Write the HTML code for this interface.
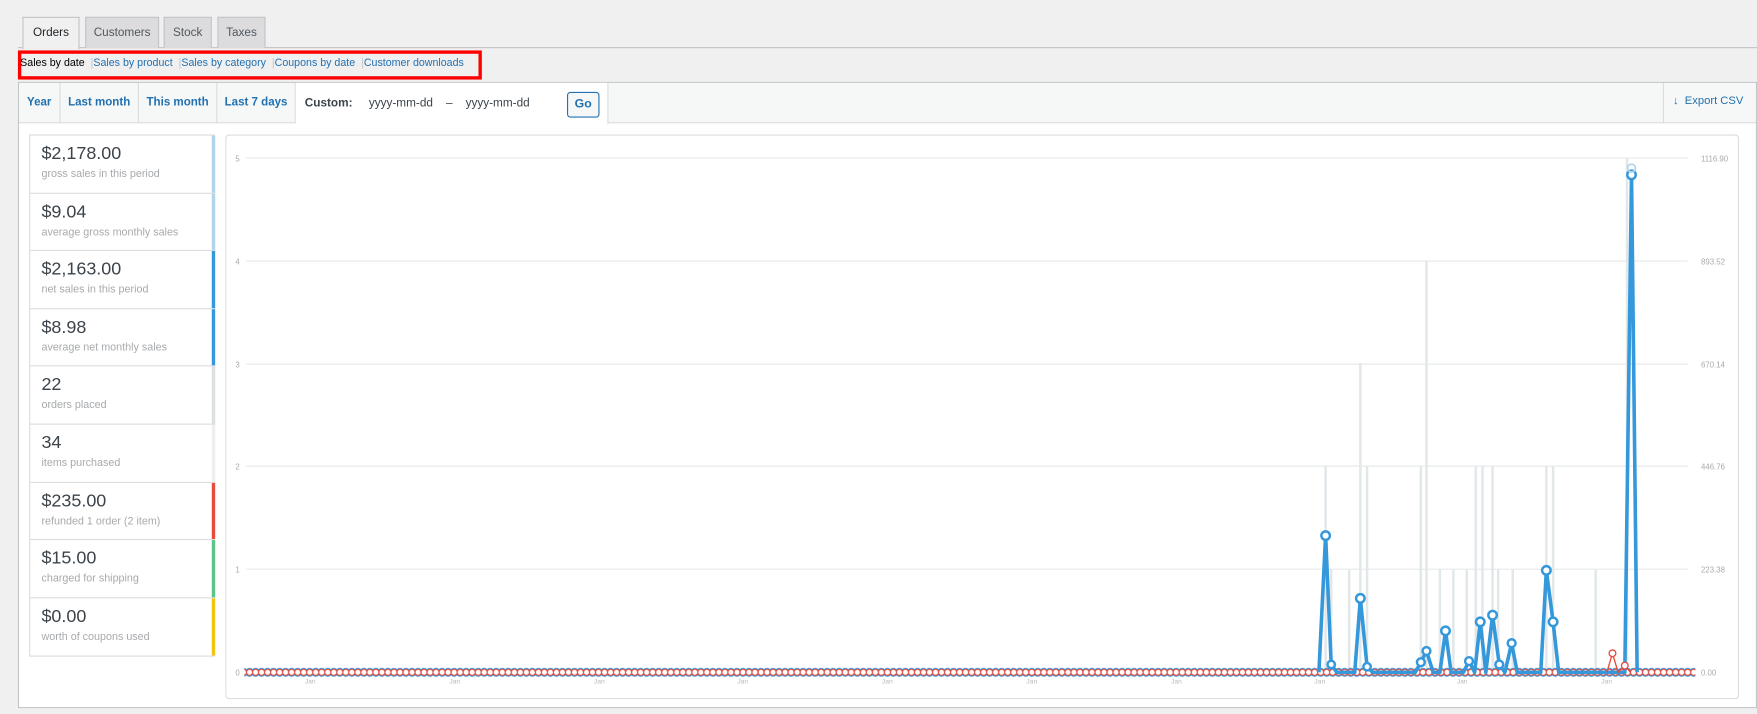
<!DOCTYPE html>
<html><head><meta charset="utf-8"><style>
*{box-sizing:border-box}
html,body{margin:0;padding:0;background:#f0f0f1;width:1757px;height:714px;overflow:hidden}
#w{position:absolute;left:0;top:0;width:1568px;height:637px;transform:scale(1.12055);transform-origin:0 0;font-family:"Liberation Sans",sans-serif;font-size:11px;color:#1d2327}
.abs{position:absolute}
.tab{position:absolute;top:15px;height:28px;border:1px solid #c3c4c7;border-bottom:none;background:#dcdcde;color:#50575e;font-size:10.5px;line-height:27px;text-align:center}
.sub a{color:#2271b1;text-decoration:none}
.range{position:absolute;top:0;height:36px;line-height:36px;color:#2271b1;font-weight:bold;font-size:10.3px;text-align:center;border-right:1px solid #dcdcde}
.item{position:absolute;left:0;width:165px;height:51.6px;border-bottom:1px solid #dcdcde;padding:8px 0 0 10px}
.item b{display:block;font-weight:normal;font-size:16px;color:#3c434a}
.item span{display:block;color:#a7aaad;font-size:9.6px;margin-top:3px}
.bar{position:absolute;right:0;top:0;width:3px;height:100%}
</style></head><body><div id="w">
<div class="abs" style="left:16px;top:42px;width:1552px;height:1px;background:#c3c4c7"></div>
<div class="tab" style="left:20px;width:51px;background:#f0f0f1;color:#1d2327;height:29px">Orders</div>
<div class="tab" style="left:76px;width:66px">Customers</div>
<div class="tab" style="left:146px;width:43px">Stock</div>
<div class="tab" style="left:194px;width:43px">Taxes</div>
<div class="abs" style="left:16px;top:45px;width:414px;height:26px;border:3px solid #f00"></div>
<div class="abs sub" style="left:18px;top:51px;font-size:9.5px;color:#c3c4c7;white-space:nowrap"><span style="color:#000">Sales by date</span> &nbsp;|<a>Sales by product</a> &nbsp;|<a>Sales by category</a> &nbsp;|<a>Coupons by date</a> &nbsp;|<a>Customer downloads</a></div>
<div class="abs" style="left:16px;top:73px;width:1552px;height:559px;background:#fff;border:1px solid #c3c4c7">
 <div class="abs" style="left:0;top:0;width:1550px;height:36px;background:#f6f7f7;border-bottom:1px solid #dcdcde"></div>
 <div class="range" style="left:0;width:37px">Year</div>
 <div class="range" style="left:37px;width:70px">Last month</div>
 <div class="range" style="left:107px;width:70px">This month</div>
 <div class="range" style="left:177px;width:70px">Last 7 days</div>
 <div class="abs" style="left:247px;top:0;width:279px;height:37px;background:#fff;border-right:1px solid #dcdcde;line-height:36px;font-size:10.5px;font-weight:bold;color:#3c434a;white-space:nowrap;padding-left:8px">Custom: &nbsp;&nbsp;&nbsp;&nbsp;<span style="font-weight:normal">yyyy-mm-dd &nbsp;&nbsp;&nbsp;– &nbsp;&nbsp;&nbsp;yyyy-mm-dd</span></div>
 <div class="abs" style="left:489px;top:8px;width:29px;height:23px;border:1px solid #2271b1;border-radius:3px;color:#2271b1;font-weight:bold;text-align:center;line-height:21px;background:#f6f7f7">Go</div>
 <div class="abs" style="left:1467px;top:0;height:36px;border-left:1px solid #dcdcde;width:83px;line-height:34px;color:#2271b1;font-size:10px;padding-left:8px">↓ &nbsp;Export CSV</div>
 <div class="abs" style="left:9px;top:46px;width:166px;height:466px;border:1px solid #dcdcde">
  <div class="item" style="top:0"><b>$2,178.00</b><span>gross sales in this period</span><div class="bar" style="background:#b1d4ea"></div></div>
  <div class="item" style="top:51.6px"><b>$9.04</b><span>average gross monthly sales</span><div class="bar" style="background:#b1d4ea"></div></div>
  <div class="item" style="top:103.2px"><b>$2,163.00</b><span>net sales in this period</span><div class="bar" style="background:#3498db"></div></div>
  <div class="item" style="top:154.8px"><b>$8.98</b><span>average net monthly sales</span><div class="bar" style="background:#3498db"></div></div>
  <div class="item" style="top:206.4px"><b>22</b><span>orders placed</span><div class="bar" style="background:#dbe1e3"></div></div>
  <div class="item" style="top:258px"><b>34</b><span>items purchased</span><div class="bar" style="background:#ecf0f1"></div></div>
  <div class="item" style="top:309.6px"><b>$235.00</b><span>refunded 1 order (2 item)</span><div class="bar" style="background:#e74c3c"></div></div>
  <div class="item" style="top:361.2px"><b>$15.00</b><span>charged for shipping</span><div class="bar" style="background:#5cc488"></div></div>
  <div class="item" style="top:412.8px;border-bottom:none"><b>$0.00</b><span>worth of coupons used</span><div class="bar" style="background:#f1c40f"></div></div>
 </div>
</div>
<svg class="abs" style="left:201px;top:120px" width="1351" height="504" viewBox="201 120 1351 504">
<defs>
<pattern id="dots" x="220" y="590" width="5.37" height="20" patternUnits="userSpaceOnUse">
<circle cx="2.7" cy="10" r="3.3" fill="#fff" stroke="#3498db" stroke-width="1.3"/>
<circle cx="2.7" cy="10" r="2.7" fill="#fff" stroke="#e74c3c" stroke-width="1"/>
</pattern>
</defs>
<rect x="201.5" y="120.5" width="1350" height="503" rx="3" fill="#fff" stroke="#dcdcde"/>
<g stroke="#e9ecee" stroke-width="1.2">
<line x1="220" y1="141" x2="1506" y2="141"/><line x1="220" y1="233" x2="1506" y2="233"/><line x1="220" y1="325" x2="1506" y2="325"/><line x1="220" y1="416" x2="1506" y2="416"/><line x1="220" y1="508" x2="1506" y2="508"/><line x1="220" y1="600" x2="1506" y2="600"/>
</g>
<g fill="#a7aaad" font-size="7" font-family="Liberation Sans,sans-serif">
<text x="210" y="144">5</text><text x="210" y="236">4</text><text x="210" y="328">3</text><text x="210" y="419">2</text><text x="210" y="511">1</text><text x="210" y="603">0</text>
<text x="1518" y="144">1116.90</text><text x="1518" y="236">893.52</text><text x="1518" y="328">670.14</text><text x="1518" y="419">446.76</text><text x="1518" y="511">223.38</text><text x="1518" y="603">0.00</text>
<g font-size="6" fill="#b5b8bb"><text x="272" y="610">Jan</text><text x="401" y="610">Jan</text><text x="530" y="610">Jan</text><text x="658" y="610">Jan</text><text x="787" y="610">Jan</text><text x="916" y="610">Jan</text><text x="1045" y="610">Jan</text><text x="1173" y="610">Jan</text><text x="1300" y="610">Jan</text><text x="1429" y="610">Jan</text></g>
</g>
<g stroke="#e2e7e9" stroke-width="2.2">
<line x1="1183" y1="416" x2="1183" y2="600"/><line x1="1188" y1="508" x2="1188" y2="600"/><line x1="1204" y1="508" x2="1204" y2="600"/><line x1="1214" y1="324" x2="1214" y2="600"/><line x1="1220" y1="416" x2="1220" y2="600"/><line x1="1268" y1="416" x2="1268" y2="600"/><line x1="1273" y1="233" x2="1273" y2="600"/><line x1="1285" y1="508" x2="1285" y2="600"/><line x1="1297" y1="508" x2="1297" y2="600"/><line x1="1309" y1="508" x2="1309" y2="600"/><line x1="1317" y1="416" x2="1317" y2="600"/><line x1="1323" y1="416" x2="1323" y2="600"/><line x1="1332" y1="416" x2="1332" y2="600"/><line x1="1337" y1="508" x2="1337" y2="600"/><line x1="1350" y1="508" x2="1350" y2="600"/><line x1="1380" y1="416" x2="1380" y2="600"/><line x1="1386" y1="416" x2="1386" y2="600"/><line x1="1424" y1="508" x2="1424" y2="600"/><line x1="1452" y1="141" x2="1452" y2="600"/>
</g>
<rect x="218" y="593" width="1295" height="14" fill="url(#dots)"/>
<polyline fill="none" stroke="#3498db" stroke-width="3.2" stroke-linejoin="round" points="1177,600 1183,478 1188,593 1193,600 1209,600 1214,534 1220,595 1225,600 1263,600 1268,591 1273,581 1279,600 1285,600 1290,563 1295,600 1306,600 1311,590 1316,600 1321,555 1326,600 1332,549 1338,593 1343,600 1349,574 1354,600 1375,600 1380,509 1386,555 1391,600 1445,600 1450,600 1456,156 1461,600"/>
<polyline fill="none" stroke="#e74c3c" stroke-width="1.2" points="1434,600 1439,583 1444,600 1450,594 1455,600"/>
<g fill="#fff" stroke="#3498db" stroke-width="2.2">
<circle cx="1183" cy="478" r="3.8"/><circle cx="1188" cy="593" r="3.3"/><circle cx="1214" cy="534" r="3.8"/><circle cx="1220" cy="595" r="3.3"/><circle cx="1268" cy="591" r="3.5"/><circle cx="1273" cy="581" r="3.5"/><circle cx="1290" cy="563" r="3.8"/><circle cx="1311" cy="590" r="3.5"/><circle cx="1321" cy="555" r="3.8"/><circle cx="1332" cy="549" r="3.8"/><circle cx="1338" cy="593" r="3.5"/><circle cx="1349" cy="574" r="3.5"/><circle cx="1380" cy="509" r="3.8"/><circle cx="1386" cy="555" r="3.8"/><circle cx="1456" cy="156" r="3.8"/>
</g>
<circle cx="1456" cy="150" r="3.5" fill="none" stroke="#b1d4ea" stroke-width="1.5"/>
<g fill="#fff" stroke="#e74c3c" stroke-width="1.2"><circle cx="1439" cy="583" r="3"/><circle cx="1450" cy="594" r="3"/></g>
</svg>
</div></body></html>
